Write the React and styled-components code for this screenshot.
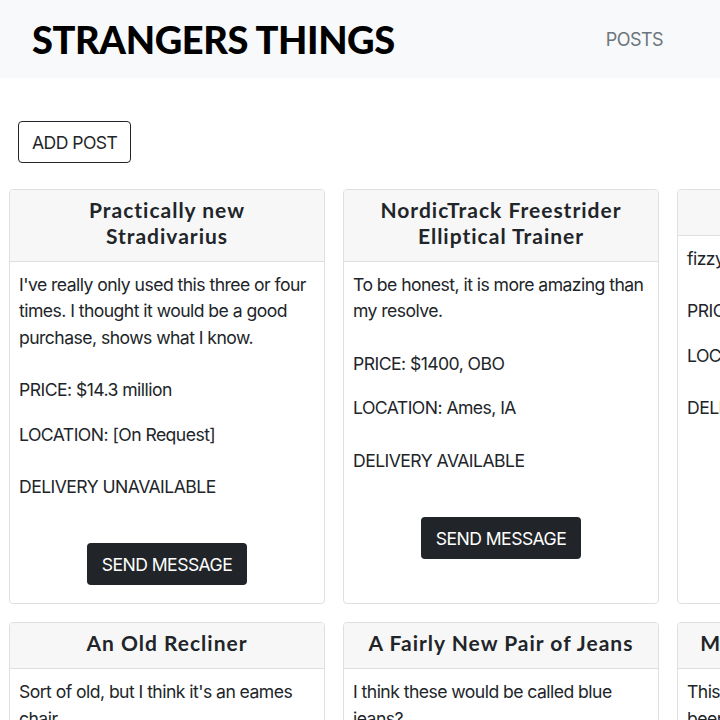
import React from 'react';
import styled, { createGlobalStyle } from 'styled-components';

const GlobalStyle = createGlobalStyle`
body {
  margin: 0;
  background: #ffffff;
  font-family: Inter, "Liberation Sans", sans-serif;
  letter-spacing: -0.55px;
  color: #212529;
  overflow-x: hidden;
}
`;

const NavBar = styled.header`
height: 78px;
background: #f8f9fa;
display: flex;
align-items: center;
justify-content: space-between;
padding: 0 57px 0 32px;
`;

const Brand = styled.h1`
margin: 0;
font-family: Lato, sans-serif;
font-weight: 900;
font-size: 38px;
letter-spacing: -0.4px;
color: #000;
`;

const NavLink = styled.a`
font-size: 18px;
color: #6c757d;
text-decoration: none;
`;

const Main = styled.main`
padding: 43px 0 0 9px;
`;

const AddButton = styled.button`
margin-left: 9px;
height: 42px;
padding: 0 13px;
background: #fff;
border: 1px solid #212529;
border-radius: 4px;
font-family: Inter, sans-serif;
letter-spacing: -0.55px;
font-size: 17.6px;
color: #212529;
`;

const Grid = styled.div`
margin-top: 26px;
width: 1000px;
display: grid;
grid-template-columns: repeat(3, 316px);
column-gap: 18px;
row-gap: 18px;
`;

const Card = styled.div`
border: 1px solid #dfdfdf;
border-radius: 4px;
overflow: hidden;
`;

const CardHeader = styled.div`
background: #f7f7f7;
border-bottom: 1px solid #dfdfdf;
padding: 7px 18px 12px;
text-align: center;
font-family: Lato, sans-serif;
font-weight: 700;
font-size: 21px;
letter-spacing: 1px;
line-height: 26px;
color: #212529;
`;

const CardBody = styled.div`
padding: 10px 9px 18px;
font-size: 17.6px;
line-height: 26.4px;
`;

const Line = styled.p`
margin: 0 0 ${p => p.gap}px;
`;

const SendButton = styled.button`
display: block;
margin: 43px auto 0;
width: 160px;
height: 42px;
background: #212529;
border: none;
border-radius: 4px;
color: #fff;
font-family: Inter, sans-serif;
letter-spacing: -0.55px;
font-size: 17.6px;
`;

const posts = [
  {
    title: 'Practically new Stradivarius',
    description: "I've really only used this three or four times. I thought it would be a good purchase, shows what I know.",
    price: '$14.3 million',
    location: '[On Request]',
    delivery: false,
  },
  {
    title: 'NordicTrack Freestrider Elliptical Trainer',
    description: 'To be honest, it is more amazing than my resolve.',
    price: '$1400, OBO',
    location: 'Ames, IA',
    delivery: true,
  },
  {
    title: 'Soda Fountain',
    description: 'fizzy drinks on tap',
    price: '$250',
    location: 'Denver, CO',
    delivery: false,
  },
  {
    title: 'An Old Recliner',
    description: "Sort of old, but I think it's an eames chair.",
    price: '$300',
    location: 'Chicago, IL',
    delivery: false,
  },
  {
    title: 'A Fairly New Pair of Jeans',
    description: 'I think these would be called blue jeans?',
    price: '$20',
    location: 'Austin, TX',
    delivery: true,
  },
  {
    title: "My Grandma's Old Guitars",
    description: 'This wonderful old instrument has been in my family for years.',
    price: '$500',
    location: 'Portland, OR',
    delivery: true,
  },
];

const App = () => {
  return (
    <>
      <GlobalStyle />
      <NavBar>
        <Brand>STRANGERS THINGS</Brand>
        <NavLink href="#">POSTS</NavLink>
      </NavBar>
      <Main>
        <AddButton>ADD POST</AddButton>
        <Grid>
          {posts.map(post => (
            <Card key={post.title}>
              <CardHeader>{post.title}</CardHeader>
              <CardBody>
                <Line gap={26}>{post.description}</Line>
                <Line gap={18}>PRICE: {post.price}</Line>
                <Line gap={26}>LOCATION: {post.location}</Line>
                <Line gap={0}>{post.delivery ? 'DELIVERY AVAILABLE' : 'DELIVERY UNAVAILABLE'}</Line>
                <SendButton>SEND MESSAGE</SendButton>
              </CardBody>
            </Card>
          ))}
        </Grid>
      </Main>
    </>
  );
};

export default App;
